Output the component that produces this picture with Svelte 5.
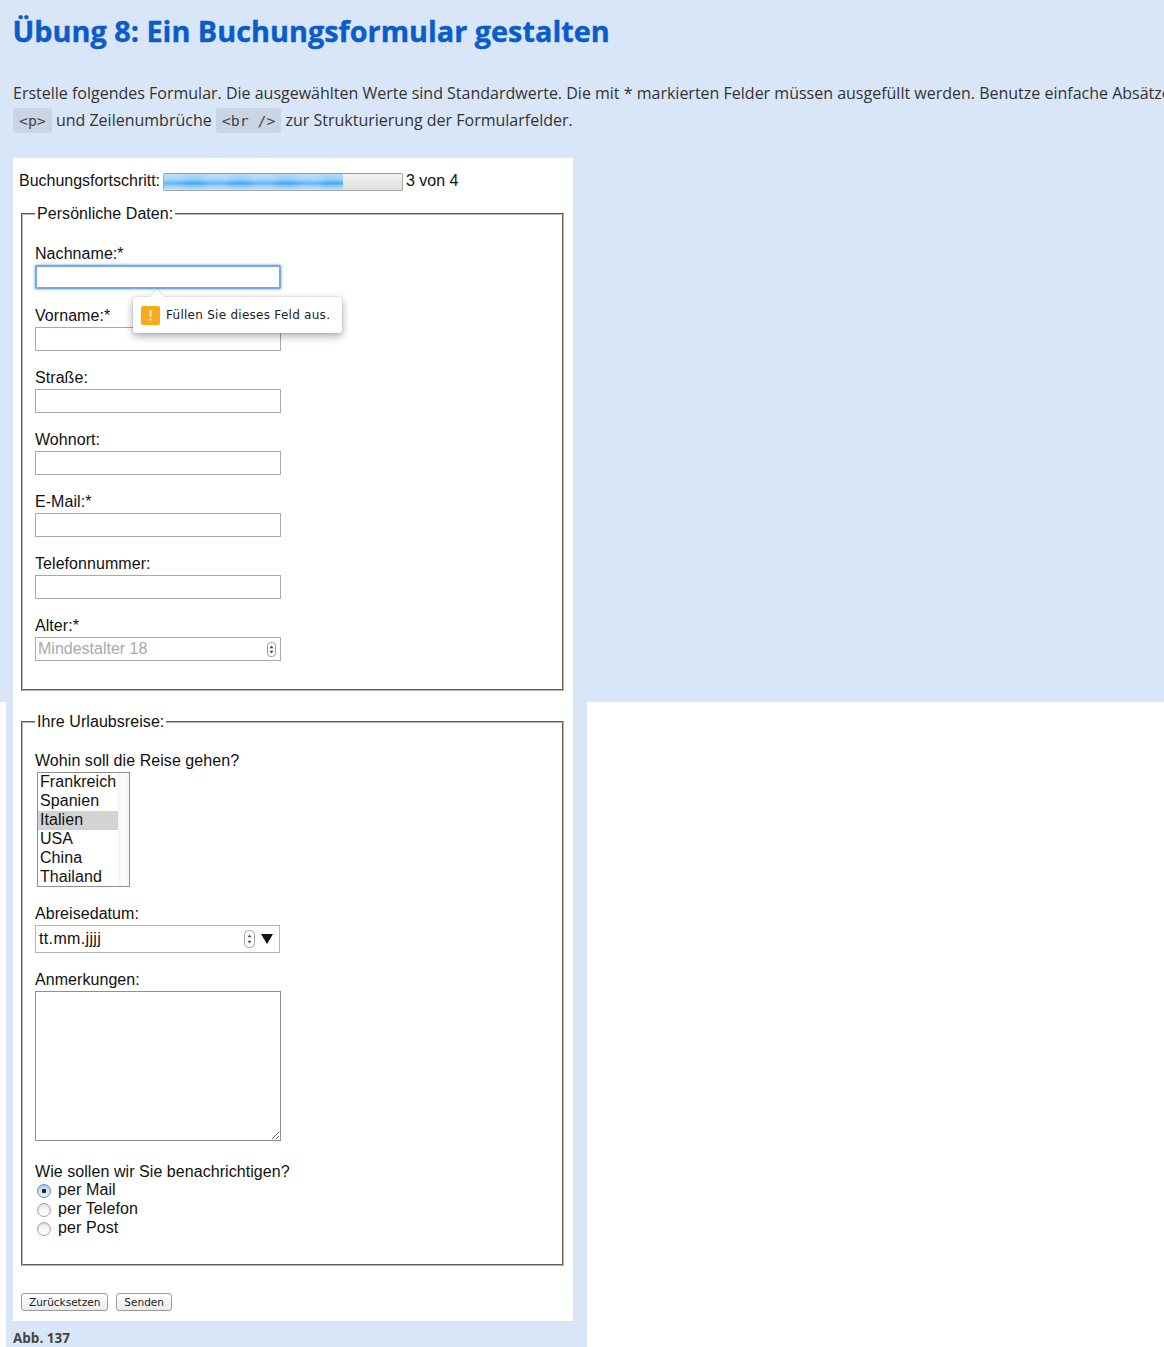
<script>
  const personal = [
    { label: 'Nachname:*', focus: true },
    { label: 'Vorname:*' },
    { label: 'Straße:' },
    { label: 'Wohnort:' },
    { label: 'E-Mail:*' },
    { label: 'Telefonnummer:' }
  ];
  const countries = ['Frankreich', 'Spanien', 'Italien', 'USA', 'China', 'Thailand'];
  const contact = ['per Mail', 'per Telefon', 'per Post'];
</script>

<div class="page">
  <h1>Übung 8: Ein Buchungsformular gestalten</h1>
  <p class="intro">Erstelle folgendes Formular. Die ausgewählten Werte sind Standardwerte. Die mit * markierten Felder müssen ausgefüllt werden. Benutze einfache Absätze<br /><code>&lt;p&gt;</code> und Zeilenumbrüche <code>&lt;br /&gt;</code> zur Strukturierung der Formularfelder.</p>

  <form class="shot" onsubmit={(e) => e.preventDefault()}>
    <div class="progress-row">
      <span>Buchungsfortschritt:</span>
      <div class="progress"><div class="fill"></div></div>
      <span>3 von 4</span>
    </div>

    <fieldset class="first">
      <legend>Persönliche Daten:</legend>
      {#each personal as f}
        <div class="field">
          <label>{f.label}<input type="text" class:focus={f.focus} /></label>
        </div>
      {/each}
      <div class="field last">
        <label>Alter:*
          <span class="wrap">
            <input type="text" class="age" placeholder="Mindestalter 18" />
            <svg class="spin small" width="9" height="15" viewBox="0 0 9 15">
              <rect x="0.5" y="0.5" width="8" height="14" rx="3" fill="#fff" stroke="#9a9a9a" />
              <path d="M4.5 3.5 6.5 6.2H2.5ZM4.5 11.5 2.5 8.8H6.500Z" fill="#444" />
            </svg>
          </span>
        </label>
      </div>
      <div class="tooltip">
        <span class="arrow"></span>
        <svg class="warn" width="19" height="19" viewBox="0 0 19 19">
          <rect width="19" height="19" rx="2" fill="#f8aa1c" />
          <path d="M8.500 4H10.500V10.500H8.500ZM8.500 12.500H10.500V14.500H8.500Z" fill="#fff4d8" />
        </svg>
        <span>Füllen Sie dieses Feld aus.</span>
      </div>
    </fieldset>

    <fieldset class="second">
      <legend>Ihre Urlaubsreise:</legend>
      <div class="q first-q">Wohin soll die Reise gehen?</div>
      <div class="listbox" role="listbox">
        <div class="opts">
          {#each countries as c}
            <div class="opt" class:sel={c === 'Italien'}>{c}</div>
          {/each}
        </div>
        <div class="track"></div>
      </div>

      <div class="q date-label">Abreisedatum:</div>
      <div class="date">
        <span>tt.mm.jjjj</span>
        <svg class="spin" width="11" height="18" viewBox="0 0 11 18">
          <rect x="0.500" y="0.500" width="10" height="17" rx="4" fill="#fff" stroke="#a5a5a5" />
          <path d="M5.500 4.500 7.500 7.300H3.500ZM5.500 13.500 3.500 10.700H7.500Z" fill="#555" />
        </svg>
        <svg class="caret" width="12" height="10" viewBox="0 0 12 10"><path d="M0 0H12L6 10Z" fill="#111" /></svg>
      </div>

      <div class="q notes-label">Anmerkungen:</div>
      <div class="notes">
        <textarea></textarea>
        <svg class="grip" width="9" height="9" viewBox="0 0 9 9"><path d="M1 8 8 1M5 8 8 5" stroke="#666" stroke-width="1" fill="none" /></svg>
      </div>

      <div class="q contact-label">Wie sollen wir Sie benachrichtigen?</div>
      <div class="radios">
        {#each contact as c, i}
          <label class="radio"><input type="radio" name="contact" checked={i === 0} /><span>{c}</span></label>
        {/each}
      </div>
    </fieldset>

    <div class="buttons">
      <button type="reset" class="btn">Zurücksetzen</button>
      <button type="submit" class="btn">Senden</button>
    </div>
  </form>

  <div class="caption">Abb. 137</div>
</div>

<style>
  :global(body) { margin: 0; }
  .page {
    width: 1164px;
    height: 1347px;
    overflow: hidden;
    box-sizing: border-box;
    padding: 0 0 0 13px;
    font-family: "Open Sans", sans-serif;
    background:
      linear-gradient(#d9e6f8, #d9e6f8) 0 0 / 100% 702px no-repeat,
      linear-gradient(#d9e6f8, #d9e6f8) 6px 0 / 581px 100% no-repeat,
      #fff;
  }
  h1 {
    margin: 0 0 0 -0.5px;
    padding-top: 12px;
    font-size: 28.850px;
    line-height: 38px;
    font-weight: 700;
    color: #0b5ccb;
    -webkit-text-stroke: 0.4px #0b5ccb;
    white-space: nowrap;
  }
  .intro {
    margin: 30px 0 0;
    font-size: 16px;
    line-height: 27px;
    color: #333;
    white-space: nowrap;
  }
  code {
    display: inline-block;
    font-family: "DejaVu Sans Mono", monospace;
    font-size: 14.800px;
    line-height: 25px;
    padding: 0 6px;
    border-radius: 3px;
    background: #c9d5e5;
    color: #444;
    vertical-align: baseline;
  }
  .shot {
    box-sizing: border-box;
    width: 560px;
    height: 1163px;
    margin-top: 24px;
    padding: 13px 8px 0;
    background: #fff;
    font-family: "Liberation Sans", sans-serif;
    font-size: 16px;
    letter-spacing: 0.06px;
    color: #111;
    display: flex;
    flex-direction: column;
  }
  .progress-row {
    display: flex;
    align-items: center;
    gap: 3px;
    margin-left: -2px;
    height: 19px;
    letter-spacing: -0.02px;
  }
  .progress {
    box-sizing: border-box;
    width: 240px;
    height: 18px;
    margin-top: 3px;
    border: 1px solid #a8a8a8;
    border-top-color: #999;
    border-radius: 2px;
    background: linear-gradient(#f2f2f2, #dedede);
    overflow: hidden;
  }
  .fill {
    width: 75%;
    height: 100%;
    background:
      repeating-linear-gradient(90deg, rgba(255,255,255,0.16) 0 14px, rgba(255,255,255,0) 26px, rgba(255,255,255,0) 34px, rgba(255,255,255,0.16) 46px),
      linear-gradient(#b5dbfb 0%, #93ccf8 35%, #45a8f5 58%, #8ccaf8 78%, #bfe0fb 100%);
  }
  fieldset {
    position: relative;
    box-sizing: border-box;
    width: 543px;
    margin: 0;
    padding: 0 12px;
    border: 2px groove #b4b4b4;
    min-width: 0;
  }
  fieldset.first { margin-top: 14px; height: 487px; }
  fieldset.second { margin-top: 21px; height: 554px; }
  legend { padding: 0 2px; line-height: 19px; }
  .field { margin-top: 17px; }
  .field:first-of-type { margin-top: 21px; }
  .field label { display: block; line-height: 19px; }
  input[type="text"] {
    display: block;
    box-sizing: border-box;
    width: 246px;
    height: 24px;
    margin: 2px 0 0;
    border: 1px solid #a9a9a9;
    border-radius: 0;
    background: #fff;
    outline: none;
    font: inherit;
  }
  input.focus {
    width: 246px;
    border: 2px solid #78a9de;
    border-radius: 2px;
    box-shadow: 0 0 2px 1px rgba(120, 170, 230, 0.6);
  }
  .wrap { display: block; position: relative; width: 246px; }
  input.age { padding: 0 2px; }
  input.age::placeholder { color: #a9a9a9; opacity: 1; }
  .spin.small { position: absolute; right: 5px; top: 5px; }
  .tooltip {
    position: absolute;
    left: 110px;
    top: 74px;
    display: flex;
    align-items: center;
    gap: 6px;
    box-sizing: border-box;
    width: 209px;
    height: 36px;
    padding: 0 8px;
    background: #fff;
    border-radius: 2px;
    box-shadow: 0 0 1px rgba(0, 0, 0, 0.45), 0 3px 8px rgba(0, 0, 0, 0.35);
    font-family: "DejaVu Sans", sans-serif;
    font-size: 12px;
    letter-spacing: 0.27px;
    color: #222;
    white-space: nowrap;
  }
  .arrow {
    position: absolute;
    left: 18px;
    top: -7px;
    width: 12px;
    height: 12px;
    background: #fff;
    transform: rotate(45deg) scale(0.8);
    box-shadow: -1px -1px 1px rgba(0, 0, 0, 0.12);
  }
  .warn { flex: none; position: relative; }
  .q { line-height: 19px; white-space: nowrap; }
  .q.first-q { margin-top: 20px; }
  .listbox {
    box-sizing: border-box;
    display: flex;
    width: 93px;
    height: 115px;
    margin: 2px 0 0 2px;
    border: 1px solid #8f8f8f;
    background: #fff;
  }
  .opts { width: 80px; }
  .opt { height: 19px; line-height: 17px; padding-left: 2px; }
  .opt.sel { background: #d3d3d3; }
  .track {
    flex: 1;
    background: linear-gradient(90deg, #f3f3f3, #fbfbfb 40%, #f5f5f5);
  }
  .q.date-label { margin-top: 17px; }
  .date {
    box-sizing: border-box;
    display: flex;
    align-items: center;
    width: 245px;
    height: 28px;
    margin-top: 2px;
    padding: 0 6px 0 3px;
    border: 1px solid #b5b5b5;
    background: #fff;
  }
  .date span { flex: 1; letter-spacing: 0.35px; }
  .caret { margin-left: 6px; }
  .q.notes-label { margin-top: 17px; }
  .notes { position: relative; width: 246px; height: 150px; margin-top: 2px; }
  textarea {
    display: block;
    box-sizing: border-box;
    width: 246px;
    height: 150px;
    margin: 0;
    border: 1px solid #8f8f8f;
    background: #fff;
    resize: none;
    outline: none;
  }
  .grip { position: absolute; right: 1px; bottom: 1px; }
  .q.contact-label { margin-top: 21px; }
  .radios { display: flex; flex-direction: column; }
  .radio { display: flex; align-items: center; height: 19px; letter-spacing: 0.1px; }
  .radio span { margin-top: -2px; }
  .radio input {
    appearance: none;
    box-sizing: border-box;
    flex: none;
    width: 14px;
    height: 14px;
    margin: 1px 7px 0 2px;
    border: 1px solid #a5a5a5;
    border-radius: 50%;
    background: linear-gradient(#f0f0f0, #fff);
    box-shadow: inset 0 1px 2px rgba(0,0,0,0.15);
  }
  .radio input:checked {
    border-color: #6b8fb5;
    background: radial-gradient(circle, #223 0 2px, transparent 2.500px), linear-gradient(#bcd9f5, #e6f2fd);
  }
  .buttons {
    display: flex;
    gap: 8px;
    margin-top: 27px;
  }
  .btn {
    box-sizing: border-box;
    height: 18px;
    padding: 1px 7px 0;
    border: 1px solid #9a9a9a;
    border-radius: 3px;
    background: linear-gradient(#fff, #ececec);
    font-family: "DejaVu Sans", sans-serif;
    font-size: 10.500px;
    line-height: 15px;
    color: #222;
  }
  .caption {
    margin-top: 8px;
    font-size: 13.500px;
    line-height: 18px;
    font-weight: 700;
    color: #444;
  }
</style>
